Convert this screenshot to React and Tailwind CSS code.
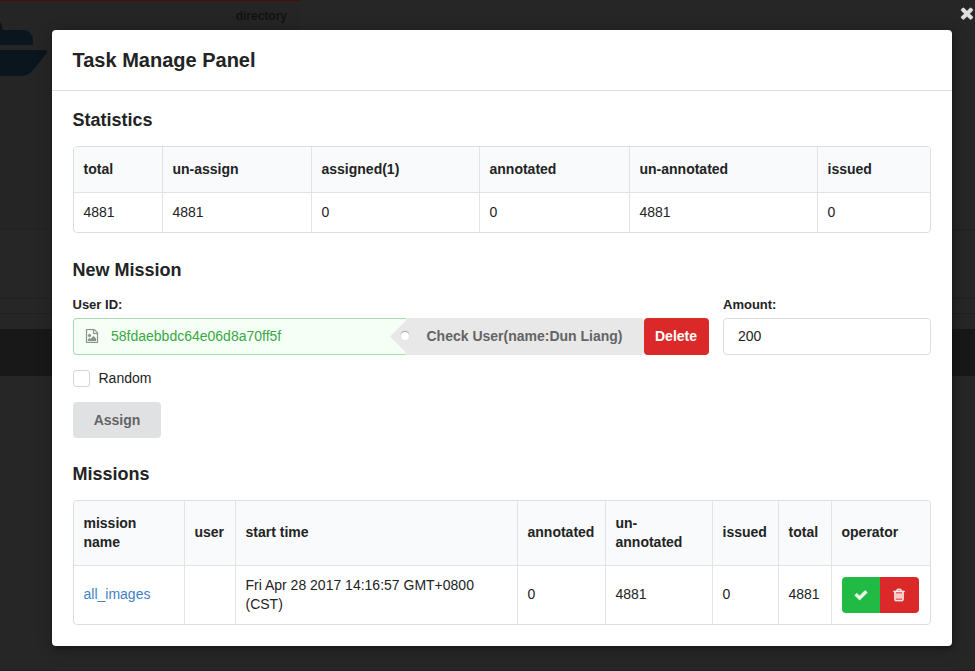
const PATHS = {
  check: "M1671 566q0 40-28 68l-724 724-136 136q-28 28-68 28t-68-28l-136-136-362-362q-28-28-28-68t28-68l136-136q28-28 68-28t68 28l294 295 656-657q28-28 68-28t68 28l136 136q28 28 28 68z",
  close: "M1490 1322q0 40-28 68l-136 136q-28 28-68 28t-68-28l-294-294-294 294q-28 28-68 28t-68-28l-136-136q-28-28-28-68t28-68l294-294-294-294q-28-28-28-68t28-68l136-136q28-28 68-28t68 28l294 294 294-294q28-28 68-28t68 28l136 136q28 28 28 68t-28 68l-294 294 294 294q28 28 28 68z",
  trash: "M704 736v576q0 14-9 23t-23 9h-64q-14 0-23-9t-9-23v-576q0-14 9-23t23-9h64q14 0 23 9t9 23zm256 0v576q0 14-9 23t-23 9h-64q-14 0-23-9t-9-23v-576q0-14 9-23t23-9h64q14 0 23 9t9 23zm256 0v576q0 14-9 23t-23 9h-64q-14 0-23-9t-9-23v-576q0-14 9-23t23-9h64q14 0 23 9t9 23zm128 724v-948h-896v948q0 22 7 40.5t14.5 27 10.5 8.5h832q3 0 10.5-8.5t14.5-27 7-40.5zm-672-1076h448l-48-117q-7-9-17-11h-317q-10 2-17 11zm928 32v64q0 14-9 23t-23 9h-96v948q0 83-47 143.5t-113 60.5h-832q-66 0-113-58.5t-47-141.5v-952h-96q-14 0-23-9t-9-23v-64q0-14 9-23t23-9h309l70-167q15-37 54-63t79-26h320q40 0 79 26t54 63l70 167h309q14 0 23 9t9 23z",
  image: "M1596 380q28 28 48 76t20 88v1152q0 40-28 68t-68 28h-1344q-40 0-68-28t-28-68v-1600q0-40 28-68t68-28h896q40 0 88 20t76 48zm-444-244v376h376q-10-29-22-41l-313-313q-12-12-41-22zm384 1528v-1024h-416q-40 0-68-28t-28-68v-416h-768v1536h1280zm-128-448v320h-1024v-192l192-192 128 128 384-384zm-832-192q-80 0-136-56t-56-136 56-136 136-56 136 56 56 136-56 136-136 56z",
};

function Icon({ name, className }) {
  return (
    <svg viewBox="0 0 1792 1792" fill="currentColor" stroke="currentColor" className={className}>
      <path d={PATHS[name]} />
    </svg>
  );
}

function DataTable({ widths, head, row, headClass, rowClass, cellClass }) {
  return (
    <div className="overflow-hidden rounded-[4px] border border-[#dcdddd]">
      <table className="w-full table-fixed border-separate border-spacing-0 text-left text-sm leading-[19px]">
        <colgroup>
          {widths.map((w, i) => (
            <col key={i} style={{ width: w }} />
          ))}
        </colgroup>
        <thead>
          <tr className={headClass}>
            {head.map((h, i) => (
              <th
                key={i}
                className={`border-b border-[#e2e3e3] bg-[#f9fafb] pt-0 pr-1 pl-[9.5px] align-middle font-bold ${cellClass} ${i ? "border-l" : ""}`}
              >
                {h}
              </th>
            ))}
          </tr>
        </thead>
        <tbody>
          <tr className={rowClass}>
            {row.map((c, i) => (
              <td key={i} className={`border-[#e2e3e3] pt-0 pr-0 pl-[9.5px] align-middle ${cellClass} ${i ? "border-l" : ""}`}>
                {c}
              </td>
            ))}
          </tr>
        </tbody>
      </table>
    </div>
  );
}

function Backdrop() {
  return (
    <div className="absolute inset-0 flex flex-col bg-[#262626]">
      <div className="flex h-[229px]">
        <div className="h-[229px] w-[300px] border-t border-[#4d0c0c] bg-[#252525]">
          <div className="flex justify-between pr-[13px]">
            <svg width="48" height="80" viewBox="0 0 48 80" fill="#0a151e">
              <path d="M0 21q2 2 3 8h20q10 1 10 11v4H0z" />
              <path d="M0 49h44q5 1 2 4L33 69q-5 6-12 6H0z" />
            </svg>
            <span className="pt-[7px] text-xs leading-4 font-bold text-[#121212]">directory</span>
          </div>
        </div>
      </div>
      <div className="h-[69px] border-t border-[#212121]" />
      <div className="h-[15px] border-t border-[#202020]" />
      <div className="h-4 border-t border-[#202020]" />
      <div className="h-[47px] bg-[#181818]" />
      <div className="flex-1 border-b border-[#202020]" />
    </div>
  );
}

export default function App() {
  return (
    <div className="relative h-[671px] w-[975px] overflow-hidden bg-[#262626] font-['Liberation_Sans',Arial,sans-serif] text-[#222324]">
      <Backdrop />
      <Icon name="close" className="absolute top-[3.5px] left-[958.3px] size-[18px] stroke-[30] text-[#dedede]" />

      <div className="relative mt-[30px] ml-[52px] h-[616px] w-[900px] rounded-[4px] bg-white shadow-[1px_3px_3px_0_rgba(0,0,0,0.2),1px_3px_15px_2px_rgba(0,0,0,0.2)]">
        <header className="flex h-[61px] items-center border-b border-[#dedede] px-[20.5px]">
          <h1 className="text-xl leading-6 font-bold">Task Manage Panel</h1>
        </header>

        <div className="flex w-[879px] flex-col pl-[21px]">
          <h2 className="mt-[17px] mb-[14px] -ml-[0.5px] text-lg leading-6 font-bold">Statistics</h2>
          <DataTable
            widths={[88, 149, 168, 150, 188, 113]}
            head={["total", "un-assign", "assigned(1)", "annotated", "un-annotated", "issued"]}
            row={["4881", "4881", "0", "0", "4881", "0"]}
            headClass="h-[46px]"
            rowClass="h-[39px]"
            cellClass="pb-0"
          />

          <h2 className="mt-[25px] mb-[13px] -ml-[0.5px] text-lg leading-6 font-bold">New Mission</h2>
          <div className="flex gap-[14px]">
            <div className="w-[636px]">
              <div className="-ml-[0.5px] h-[23px] text-[13px] leading-[19px] font-bold">User ID:</div>
              <div className="flex h-[37px]">
                <div className="flex w-[333px] items-center rounded-l-[4px] border border-r-0 border-[#a8deae] bg-[#f5fff6] text-sm">
                  <Icon name="image" className="mb-px ml-[11px] size-[14px] stroke-[30] text-[#8a938b]" />
                  <span className="ml-3 pb-[2px] text-[#3aa745]">58fdaebbdc64e06d8a70ff5f</span>
                </div>
                <div className="relative flex w-[238px] items-center rounded-r-[4px] bg-[#e8e8e8] text-sm font-bold text-[#646464]">
                  <svg className="absolute top-0 -left-4 h-[37px] w-4" viewBox="0 0 16 37">
                    <path d="M16 2.5L0 18.5l16 16z" fill="#e8e8e8" />
                  </svg>
                  <span className="absolute top-[14px] -left-[5px] size-2 rounded-full bg-white shadow-[0_-1px_1px_0_rgba(0,0,0,0.3)]" />
                  <span className="pb-[2px] pl-[20.5px]">Check User(name:Dun Liang)</span>
                </div>
                <button className="w-[65px] rounded-[4px] bg-[#db2828] pr-px pb-[2px] text-sm font-bold text-white">Delete</button>
              </div>
            </div>
            <div className="w-[208px]">
              <div className="h-[23px] text-[13px] leading-[19px] font-bold">Amount:</div>
              <div className="flex h-[37px] items-center rounded-[4px] border border-[#dcdddd] pb-[2px] pl-[14px] text-sm">200</div>
            </div>
          </div>

          <div className="mt-[14px] flex h-[19px] items-center">
            <span className="size-[17px] rounded-[3px] border border-[#d4d4d5]" />
            <span className="ml-[8.5px] text-sm leading-[19px]">Random</span>
          </div>
          <button className="mt-[14px] h-9 w-[88px] rounded-[4px] bg-[#e0e1e2] text-sm font-bold text-[#646465]">Assign</button>

          <h2 className="mt-[24px] mb-[14px] -ml-[0.5px] text-lg leading-6 font-bold">Missions</h2>
          <DataTable
            widths={[110, 51, 282, 88, 107, 66, 53, 99]}
            head={[
              <>mission<br />name</>,
              "user",
              "start time",
              "annotated",
              <>un-<br />annotated</>,
              "issued",
              "total",
              "operator",
            ]}
            row={[
              <span className="text-[#4183c4]">all_images</span>,
              "",
              <>Fri Apr 28 2017 14:16:57 GMT+0800<br />(CST)</>,
              "0",
              "4881",
              "0",
              "4881",
              <div className="relative top-[0.5px] ml-[0.5px] flex h-9 w-[77px] overflow-hidden rounded-[4px] text-white">
                <button className="flex w-[38px] items-center justify-center bg-[#21ba45] pr-px">
                  <Icon name="check" className="size-[14px] stroke-[80] opacity-90" />
                </button>
                <button className="flex w-[39px] items-center justify-center bg-[#db2828] pr-px">
                  <Icon name="trash" className="size-[14px] stroke-[90] opacity-90" />
                </button>
              </div>,
            ]}
            headClass="h-[65px]"
            rowClass="h-[58px]"
            cellClass="pb-px"
          />
        </div>
      </div>
    </div>
  );
}
